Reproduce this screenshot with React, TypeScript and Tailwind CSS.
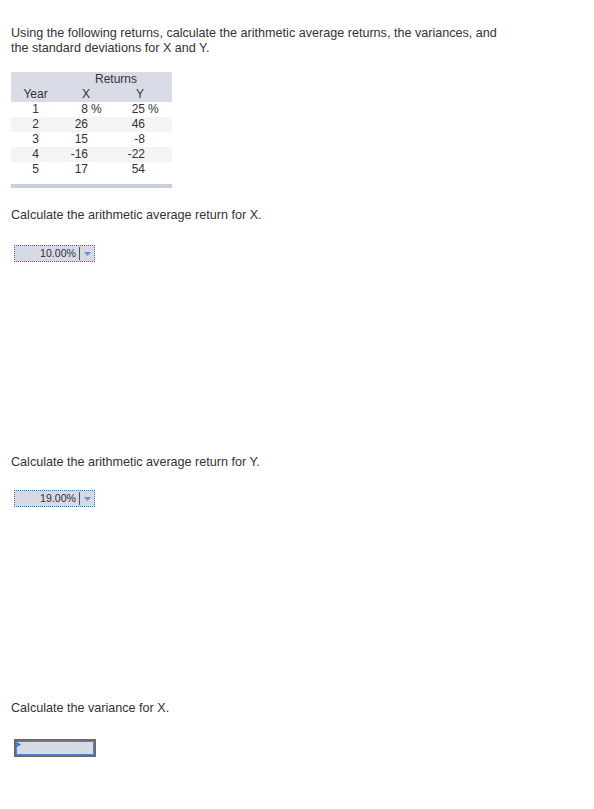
import type { ReactNode } from 'react';

const rows = [
  { year: 1, x: '8', y: '25', pct: true },
  { year: 2, x: '26', y: '46' },
  { year: 3, x: '15', y: '-8' },
  { year: 4, x: '-16', y: '-22' },
  { year: 5, x: '17', y: '54' },
];

function Question({ children }: { children: ReactNode }) {
  return <p className="text-[12.6px] leading-[15px] text-[#333]">{children}</p>;
}

function Dropdown({ value }: { value: string }) {
  return (
    <div className="flex h-[17px] w-[81px] items-center border border-dotted border-[#3b76d1] bg-[#d6dae5]">
      <span className="flex-1 pr-[3px] text-right text-[10.6px] leading-none text-[#333]">{value}</span>
      <span className="h-[13px] w-px bg-[#4b5563]" />
      <span className="flex w-[14px] justify-center">
        <svg width="7" height="4" viewBox="0 0 7 4">
          <path d="M0 0h7L3.5 4z" fill="#6b8fc4" />
        </svg>
      </span>
    </div>
  );
}

function EmptyInput() {
  return (
    <div className="relative h-[18px] w-[82px] border-2 border-[#6b6b6b] bg-[#d6dae5]">
      <div className="absolute inset-0 border border-[#4d86d6]" />
      <svg className="absolute left-[1px] top-[1px]" width="4" height="5" viewBox="0 0 4 5">
        <path d="M0 0l4 2.5L0 5z" fill="#3b76d1" />
      </svg>
    </div>
  );
}

function ReturnsTable() {
  return (
    <div className="mt-[16px] w-[161px] text-[12px] leading-[15px] text-[#333]">
      <div className="bg-[#d9dce6]">
        <div className="flex">
          <div className="w-[49px]" />
          <div className="flex-1 text-center">Returns</div>
        </div>
        <div className="flex">
          <div className="w-[49px] text-center">Year</div>
          <div className="w-[52px] text-center">X</div>
          <div className="w-[60px] pr-[4px] text-center">Y</div>
        </div>
      </div>
      {rows.map((row, i) => (
        <div key={row.year} className={`flex ${i % 2 === 1 ? 'bg-[#f4f4f4]' : ''}`}>
          <div className="w-[49px] text-center">{row.year}</div>
          <div className="w-[28px] text-right">{row.x}</div>
          <div className="w-[28px] pl-[3px]">{row.pct ? '%' : ''}</div>
          <div className="w-[29px] text-right">{row.y}</div>
          <div className="pl-[3px]">{row.pct ? '%' : ''}</div>
        </div>
      ))}
      <div className="mt-[7px] h-[4px] bg-[#c9cfdb]" />
    </div>
  );
}

export default function App() {
  return (
    <div className="min-h-[809px] bg-white pl-[11px] pt-[26px] font-['Liberation_Sans',Arial,sans-serif]">
      <Question>
        Using the following returns, calculate the arithmetic average returns, the variances, and
        <br />
        the standard deviations for X and Y.
      </Question>
      <ReturnsTable />
      <div className="mt-[20px]">
        <Question>Calculate the arithmetic average return for X.</Question>
      </div>
      <div className="mt-[22px] pl-[3px]">
        <Dropdown value="10.00%" />
      </div>
      <div className="mt-[193px]">
        <Question>Calculate the arithmetic average return for Y.</Question>
      </div>
      <div className="mt-[20px] pl-[3px]">
        <Dropdown value="19.00%" />
      </div>
      <div className="mt-[194px]">
        <Question>Calculate the variance for X.</Question>
      </div>
      <div className="mt-[23px] pl-[3px]">
        <EmptyInput />
      </div>
    </div>
  );
}
